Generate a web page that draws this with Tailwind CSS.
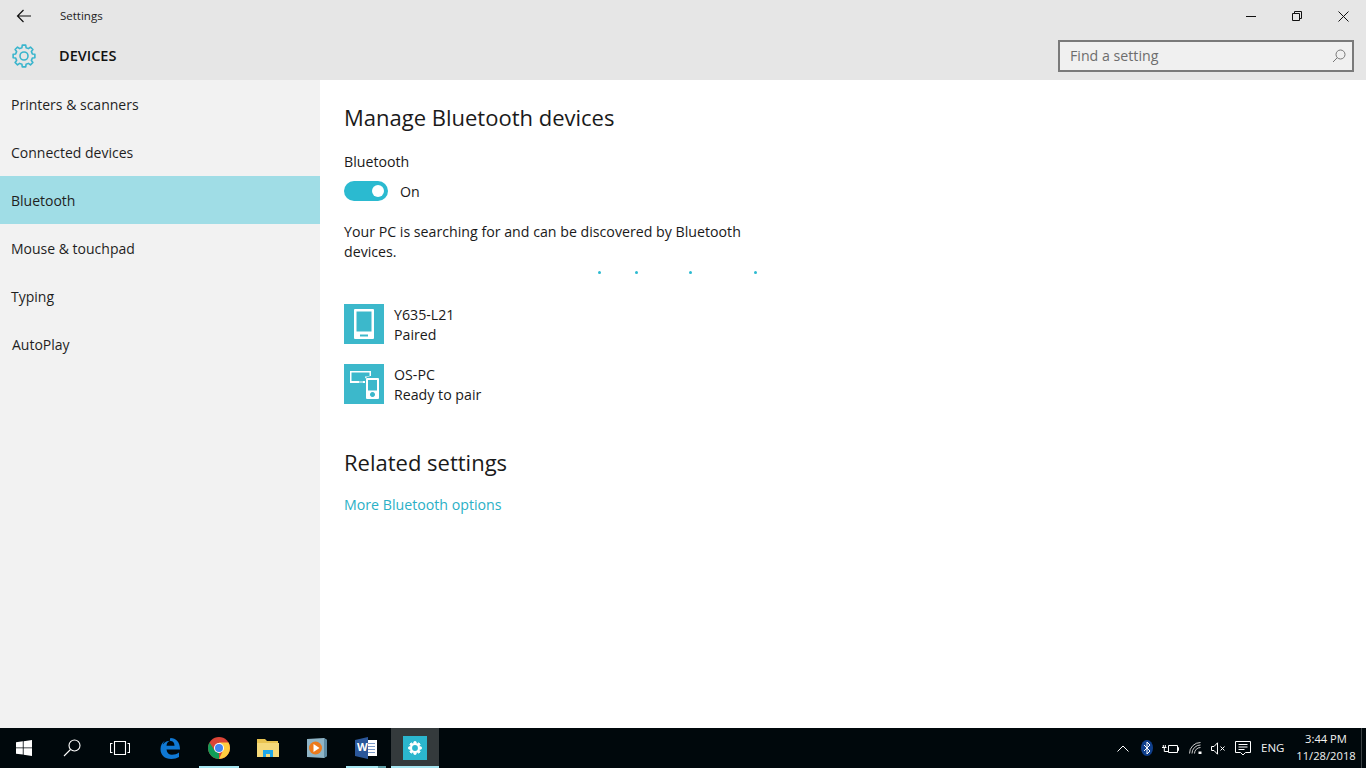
<!DOCTYPE html>
<html lang="en">
<head>
    <meta charset="UTF-8">
    <title>Settings</title>
    <script src="https://cdn.jsdelivr.net/npm/@tailwindcss/browser@4"></script>
</head>
<body class="font-['Open_Sans',sans-serif] text-[#1a1a1a] overflow-hidden">
    <div class="flex flex-col w-[1366px] h-[768px]">
        <!-- Title bar + header -->
        <div class="bg-[#e6e6e6] h-20 shrink-0 flex flex-col">
            <div class="h-8 flex items-center">
                <div class="w-12 flex justify-center">
                    <svg width="16" height="14" viewBox="0 0 16 14" fill="none" stroke="#111" stroke-width="1.2"><path d="M15 7H1.500M7.500 1 1.500 7l6 6"/></svg>
                </div>
                <span class="ml-3 text-[11.5px] text-[#222]">Settings</span>
                <div class="ml-auto flex items-center h-full">
                    <div class="w-[46px] flex justify-center"><div class="w-[10px] h-px bg-[#111]"></div></div>
                    <div class="w-[46px] flex justify-center">
                        <svg width="10" height="10" viewBox="0 0 10 10" fill="none" stroke="#111"><path d="M.5 2.500h7v7h-7zM2.500 2.500v-2h7v7h-2"/></svg>
                    </div>
                    <div class="w-[46px] flex justify-center">
                        <svg width="11" height="11" viewBox="0 0 11 11" fill="none" stroke="#111"><path d="M.5.5l10 10M10.500.5l-10 10"/></svg>
                    </div>
                </div>
            </div>
            <div class="flex-1 flex items-center pl-3 pr-3">
                <svg width="24" height="24" viewBox="0 0 24 24" fill="none" stroke="#3ab5cd" stroke-width="1.6" stroke-linejoin="round"><path d="M9.920 3.660 10.280 1.130H13.720L14.080 3.660 16.430 4.630 18.470 3.100 20.900 5.530 19.370 7.570 20.340 9.920 22.870 10.280V13.720L20.340 14.080 19.370 16.430 20.900 18.470 18.470 20.900 16.430 19.370 14.080 20.340 13.720 22.870H10.280L9.920 20.340 7.570 19.370 5.530 20.900 3.100 18.470 4.630 16.430 3.660 14.080 1.130 13.720V10.280L3.660 9.920 4.630 7.570 3.100 5.530 5.530 3.100 7.570 4.630z"/><circle cx="12" cy="12" r="4"/></svg>
                <span class="ml-[23px] text-[14.5px] font-semibold text-[#111]">DEVICES</span>
                <div class="ml-auto w-[296px] h-8 border-2 border-[#7a7a7a] bg-[#f0f0f0] flex items-center pl-[10px] pr-[6px]">
                    <span class="text-[14.2px] text-[#6d6d6d]">Find a setting</span>
                    <svg class="ml-auto" width="14" height="14" viewBox="0 0 14 14" fill="none" stroke="#777"><circle cx="8.500" cy="5.500" r="4.500"/><path d="M5.300 8.700 1 13"/></svg>
                </div>
            </div>
        </div>

        <div class="flex flex-1 min-h-0">
            <!-- Sidebar -->
            <nav class="w-80 bg-[#f2f2f2] text-sm text-[#1f1f1f]">
                <div class="h-12 pt-[2px] flex items-center pl-[11px]">Printers &amp; scanners</div>
                <div class="h-12 pt-[2px] flex items-center pl-[11px]">Connected devices</div>
                <div class="h-12 pt-[2px] flex items-center pl-[11px] bg-[#a0dde6]">Bluetooth</div>
                <div class="h-12 pt-[2px] flex items-center pl-[11px]">Mouse &amp; touchpad</div>
                <div class="h-12 pt-[2px] flex items-center pl-[11px]">Typing</div>
                <div class="h-12 pt-[2px] flex items-center pl-3">AutoPlay</div>
            </nav>

            <!-- Main -->
            <main class="flex-1 bg-white pl-6 pt-[19px] text-[14.2px]">
                <h1 class="text-[22px] leading-9 text-[#1a1a1a]">Manage Bluetooth devices</h1>
                <p class="mt-[17px] leading-5">Bluetooth</p>
                <div class="mt-[9px] flex items-center h-5">
                    <div class="w-11 h-5 rounded-full bg-[#2bbad0] flex items-center justify-end pr-[4px]">
                        <div class="w-3 h-3 rounded-full bg-white"></div>
                    </div>
                    <span class="ml-3 pt-[2px]">On</span>
                </div>
                <p class="mt-[21px] w-[420px] leading-5">Your PC is searching for and can be discovered by Bluetooth devices.</p>
                <div class="relative h-0 w-[420px]">
                    <span class="absolute left-[254px] top-[9px] w-[3px] h-[3px] rounded-full bg-[#2bbad0]"></span>
                    <span class="absolute left-[291px] top-[9px] w-[3px] h-[3px] rounded-full bg-[#2bbad0]"></span>
                    <span class="absolute left-[345px] top-[9px] w-[3px] h-[3px] rounded-full bg-[#2bbad0]"></span>
                    <span class="absolute left-[410px] top-[9px] w-[3px] h-[3px] rounded-full bg-[#2bbad0]"></span>
                </div>
                <div class="mt-[42px] h-10 flex items-center">
                    <div class="w-10 h-10 bg-[#3cb8cb] flex items-center justify-center">
                        <svg width="20" height="30" viewBox="0 0 20 30"><path fill="#fff" fill-rule="evenodd" d="M1 0h18a1 1 0 0 1 1 1v28a1 1 0 0 1-1 1H1a1 1 0 0 1-1-1V1a1 1 0 0 1 1-1zm1.500 2.500v20h15v-20zM6 25.500v2h8v-2z"/></svg>
                    </div>
                    <div class="ml-[10px] pt-[2px] leading-5">
                        <div>Y635-L21</div>
                        <div>Paired</div>
                    </div>
                </div>
                <div class="mt-5 h-10 flex items-center">
                    <div class="w-10 h-10 bg-[#3cb8cb] relative">
                        <svg class="absolute left-[6px] top-[7px]" width="30" height="28" viewBox="0 0 30 28"><path fill="#fff" fill-rule="evenodd" d="M0 0h21v5h-4v1.500h-1a2 2 0 0 0-1 1.500v4H0zm1.500 1.500V10h13.500V5.500h4.500v-4zM9 10.500v1h4v-1zM17 7h11a1 1 0 0 1 1 1v19a1 1 0 0 1-1 1H17a1 1 0 0 1-1-1V8a1 1 0 0 1 1-1zm1 2v10.500h9V9zm4.500 12a2.500 2.500 0 1 0 .01 0z"/><circle cx="22.500" cy="23.500" r="1.500" fill="#3cb8cb"/></svg>
                    </div>
                    <div class="ml-[10px] pt-[2px] leading-5">
                        <div>OS-PC</div>
                        <div>Ready to pair</div>
                    </div>
                </div>
                <h2 class="mt-10 text-[22px] leading-9 text-[#1a1a1a]">Related settings</h2>
                <a class="block mt-[15px] leading-5 text-[#2bb0c6]">More Bluetooth options</a>
            </main>
        </div>

        <!-- Taskbar -->
        <div class="h-10 shrink-0 bg-[#00080c] flex items-stretch text-white">
            <div class="w-12 flex items-center justify-center">
                <svg width="16" height="16" viewBox="0 0 16 16" fill="#fff"><path d="M0 2.300 6.800 1.300V7.500H0zM7.600 1.200 16 0v7.500H7.600zM0 8.300h6.800v6.300L0 13.700zM7.600 8.300H16V16l-8.400-1.200z"/></svg>
            </div>
            <div class="w-12 flex items-center justify-center">
                <svg width="18" height="18" viewBox="0 0 18 18" fill="none" stroke="#fff" stroke-width="1.100"><circle cx="11.500" cy="6.500" r="5.500"/><path d="M7.500 10.500 1 17"/></svg>
            </div>
            <div class="w-12 flex items-center justify-center">
                <svg width="20" height="14" viewBox="0 0 20 14" fill="none" stroke="#fff" stroke-width="1.100"><path d="M4.500.5h11v13h-11zM2.500 2.500h-2v9h2M17.500 2.500h2v9h-2"/></svg>
            </div>
            <div class="ml-[2px] flex gap-px">
                <div class="w-12 flex items-center justify-center">
                    <svg width="20" height="21" viewBox="0 0 20 21"><path fill="#0f78d4" d="M10.500 0C16 0 20 4 20 11.500H6.500c.3 3.500 2.500 5.300 5.500 5.300 2.600 0 5-.8 7-2.200v4.400c-2 1.300-4.700 2-7.700 2C4.500 21 .5 17 .5 11 .5 8 2 4.500 5 2.600 3.800 4 3 5.300 2.800 6.500 5 3.500 7.500 2.700 10 2.700c-2 .5-3.300 2.600-3.500 5h8c0-3-1.500-4.700-4-4.700-.8 0-.5-3 0-3z"/></svg>
                </div>
                <div class="w-12 relative flex items-center justify-center">
                    <svg width="22" height="22" viewBox="0 0 22 22"><circle cx="11" cy="11" r="11" fill="#db4437"/><path fill="#0f9d58" d="M11 22A11 11 0 0 1 1.500 5.500L7 14l4 2z"/><path fill="#ffcd40" d="M11 22a11 11 0 0 0 9.500-16.500H11l4 8z"/><circle cx="11" cy="11" r="5" fill="#fff"/><circle cx="11" cy="11" r="4" fill="#4285f4"/></svg>
                    <div class="absolute bottom-0 left-1 w-10 h-[2px] bg-[#a6e6f2]"></div>
                </div>
                <div class="w-12 flex items-center justify-center">
                    <svg width="22" height="20" viewBox="0 0 22 20"><path fill="#e8c350" d="M0 1h8l2 2h11v4H0z"/><path fill="#f5d97a" d="M0 5h22v14H0z"/><path fill="#1fa7e8" d="M6 19v-7h10v7h-3v-3H9v3z"/></svg>
                </div>
                <div class="w-12 flex items-center justify-center">
                    <svg width="20" height="20" viewBox="0 0 20 20"><path fill="#8fb4c6" d="M0 1 17 0l3 2v16l-3 2-17-1z"/><path fill="#5d8aa3" d="M17 0l3 2v16l-3 2z"/><circle cx="8.500" cy="10" r="6.500" fill="#ec7a1c"/><path fill="#fff" d="M6.500 6 12.500 10l-6 4z"/></svg>
                </div>
                <div class="w-12 relative flex items-center justify-center">
                    <svg width="22" height="22" viewBox="0 0 22 22"><path fill="#fff" d="M9 3h13v16H9z"/><path fill="#7b9ac8" d="M13 6h7v1h-7zM13 9h7v1h-7zM13 12h7v1h-7zM13 15h7v1h-7z"/><path fill="#2b579a" d="M0 3 13 0v22L0 19z"/></svg>
                    <span class="absolute left-[15px] top-[11px] text-[11px] font-bold leading-4">W</span>
                    <div class="absolute bottom-0 left-1 w-8 h-[2px] bg-[#a6e6f2]"></div>
                    <div class="absolute bottom-0 left-9 w-2 h-[2px] bg-[#5f9ea6]"></div>
                </div>
                <div class="w-12 relative bg-[#343a3c] flex items-center justify-center">
                    <div class="w-6 h-6 bg-[#2bb6ce] flex items-center justify-center">
                        <svg width="14" height="14" viewBox="0 0 24 24" fill="#fff" stroke="#fff" stroke-width="1.500" stroke-linejoin="round"><path fill-rule="evenodd" d="M9.920 3.660 10.280 1.130H13.720L14.080 3.660 16.430 4.630 18.470 3.100 20.900 5.530 19.370 7.570 20.340 9.920 22.870 10.280V13.720L20.340 14.080 19.370 16.430 20.900 18.470 18.470 20.900 16.430 19.370 14.080 20.340 13.720 22.870H10.280L9.920 20.340 7.570 19.370 5.530 20.900 3.100 18.470 4.630 16.430 3.660 14.080 1.130 13.720V10.280L3.660 9.920 4.630 7.570 3.100 5.530 5.530 3.100 7.570 4.630z"/><circle cx="12" cy="12" r="5" fill="#2bb6ce" stroke="none"/></svg>
                    </div>
                    <div class="absolute bottom-0 left-0 right-0 h-[2px] bg-[#a6e6f2]"></div>
                </div>
            </div>

            <!-- Tray -->
            <div class="ml-auto flex items-center">
                <svg class="mr-[12px]" width="12" height="7" viewBox="0 0 12 7" fill="none" stroke="#fff"><path d="M.5 6.500 6 1l5.500 5.500"/></svg>
                <svg class="mr-[9px]" width="12" height="16" viewBox="0 0 12 16"><ellipse cx="6" cy="8" rx="6" ry="8" fill="#0f3f8c"/><path fill="none" stroke="#fff" d="M3 5l6 6-3 3V2l3 3-6 6"/></svg>
                <svg class="mr-[10px]" width="17" height="12" viewBox="0 0 17 12" fill="none" stroke="#fff"><path d="M6.500 3.500h9v7h-9zM15.500 5.500h1v3h-1M0 5.500h4.500M1.300 3v2.500M3.300 3v2.500M2.300 6v3.500h4"/></svg>
                <svg class="mr-[9px]" width="13" height="12" viewBox="0 0 13 12" fill="none" stroke="#ccc"><path d="M.5 11.500a11 11 0 0 1 11-11M3 11.500a8.500 8.500 0 0 1 8.500-8.500M5.500 11.500a6 6 0 0 1 6-6"/><path fill="#fff" stroke="none" d="M9.500 9.500h3v2.500h-3z"/></svg>
                <svg class="mr-[9px]" width="15" height="13" viewBox="0 0 15 13" fill="none" stroke="#fff"><path d="M.5 4.500h2.500L6.500.8v11.400L3 8.500H.5zM9.500 4.500l4 4M13.500 4.500l-4 4"/></svg>
                <svg class="mr-[10px]" width="16" height="15" viewBox="0 0 16 15" fill="none" stroke="#fff"><path d="M.5.500h15v11h-5L8 14l-2.500-2.500h-5zM3.500 3.500h9M3.500 6h9M3.500 8.500h6"/></svg>
                <span class="text-[11.5px] w-6 text-[#f2f2f2]">ENG</span>
                <div class="ml-[7px] w-[68px] mb-[2px] text-center text-[11.2px] leading-[17px] text-[#f2f2f2]">
                    <div>3:44 PM</div>
                    <div>11/28/2018</div>
                </div>
                <div class="w-[5px] h-full ml-px border-l border-[#3a4144]"></div>
            </div>
        </div>
    </div>
</body>
</html>
